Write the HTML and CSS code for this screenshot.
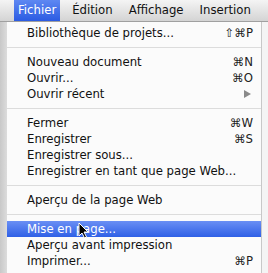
FILE: index.html
```html
<!DOCTYPE html>
<html lang="fr">
<head>
    <meta charset="UTF-8">
    <title>Menu Fichier</title>
    <link rel="stylesheet" href="styles.css">
</head>
<body>
    <div class="menubar">
        <span class="title active">Fichier</span>
        <span class="title">Édition</span>
        <span class="title">Affichage</span>
        <span class="title">Insertion</span>
    </div>
    <div class="screen">
        <div class="menu">
            <div class="item"><span>Bibliothèque de projets...</span><span class="key">⇧⌘P</span></div>
            <div class="sep"></div>
            <div class="item"><span>Nouveau document</span><span class="key">⌘N</span></div>
            <div class="item"><span>Ouvrir...</span><span class="key">⌘O</span></div>
            <div class="item"><span>Ouvrir récent</span><span class="arrow"></span></div>
            <div class="sep"></div>
            <div class="item"><span>Fermer</span><span class="key">⌘W</span></div>
            <div class="item"><span>Enregistrer</span><span class="key">⌘S</span></div>
            <div class="item"><span>Enregistrer sous...</span></div>
            <div class="item"><span>Enregistrer en tant que page Web...</span></div>
            <div class="sep"></div>
            <div class="item"><span>Aperçu de la page Web</span></div>
            <div class="sep"></div>
            <div class="item selected"><span>Mise en page...</span>
                <svg class="cursor" width="11" height="17" viewBox="0 0 11 17">
                    <path d="M1 1 L1 14 L4 11 L6.5 16 L8.5 15 L6 10 L10 10 Z" fill="#000" stroke="#fff" stroke-width="1"/>
                </svg>
            </div>
            <div class="item"><span>Aperçu avant impression</span></div>
            <div class="item"><span>Imprimer...</span><span class="key">⌘P</span></div>
        </div>
    </div>
</body>
</html>
```

FILE: styles.css
```css
body {
    margin: 0;
    width: 268px;
    height: 273px;
    overflow: hidden;
    font-family: 'DejaVu Sans', sans-serif;
    font-size: 11.7px;
    background-color: #e8e8e8;
}
.menubar {
    height: 22px;
    display: flex;
    gap: 8px;
    padding-left: 14px;
    background: linear-gradient(#f4f4f4, #d4d4d4);
    border-bottom: 1px solid #a0a0a0;
    box-sizing: border-box;
}
.title {
    padding: 0 4px;
    line-height: 21px;
    font-size: 11.7px;
    color: #111;
}
.title.active {
    color: white;
    background: linear-gradient(#5e88f2, #2b5be2);
}
.screen {
    height: 251px;
    padding-left: 7px;
    background: linear-gradient(90deg, #c8c8c8, #dcdcdc 7px, #f4f4f4 7px);
}
.menu {
    width: 255px;
    height: 100%;
    padding-top: 3px;
    box-sizing: border-box;
    background-color: #fbfbfb;
    border-right: 1px solid #c8c8c8;
}
.item {
    position: relative;
    display: flex;
    justify-content: space-between;
    align-items: center;
    height: 16px;
    padding: 0 8px 0 20px;
    color: #111;
}
.item.selected {
    color: white;
    background: linear-gradient(#6a8ff4, #2f60e6);
}
.key {
    color: #222;
}
.arrow {
    width: 0;
    height: 0;
    border-top: 4px solid transparent;
    border-bottom: 4px solid transparent;
    border-left: 7px solid #8a8a8a;
    margin-right: 2px;
}
.sep {
    height: 1px;
    margin: 6px 0;
    background-color: #dcdcdc;
}
.cursor {
    position: absolute;
    left: 71px;
    top: 1px;
}
```
